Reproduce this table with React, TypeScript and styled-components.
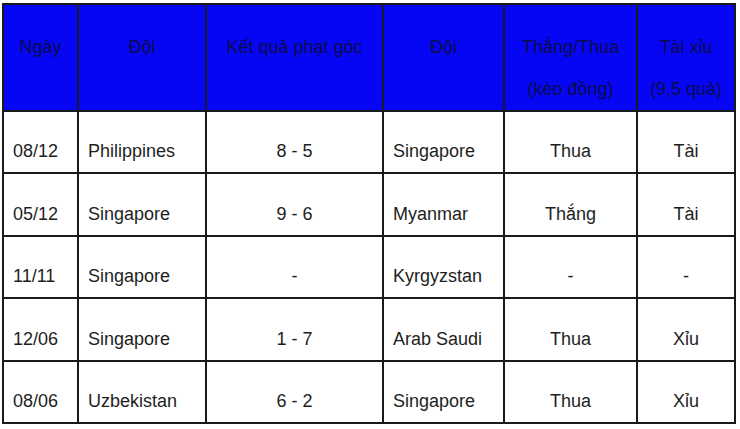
import React from 'react';
import styled, { createGlobalStyle } from 'styled-components';

const GlobalStyle = createGlobalStyle`
  body {
    margin: 0;
    background: #ffffff;
    font-family: "Liberation Sans", Arial, sans-serif;
  }
`;

const Page = styled.div`
  padding: 3px 0 0 2px;
`;

const Table = styled.table`
  width: 732px;
  table-layout: fixed;
  border-collapse: collapse;
  font-size: 18px;
  color: #1e1e1e;
`;

const HeadCell = styled.th`
  background: #0606f4;
  color: #0c0c4c;
  font-weight: normal;
  text-align: center;
  vertical-align: top;
  line-height: 42px;
  padding: 21px 4px 0;
  border: 2px solid #1a1a1a;
`;

const Cell = styled.td<{ $align?: 'left' | 'center' }>`
  text-align: ${(p) => p.$align ?? 'left'};
  vertical-align: top;
  line-height: 42px;
  padding: 18.4px 9px 0;
  border: 2px solid #1a1a1a;
  white-space: nowrap;
`;

const widths = [75, 128, 177, 121, 133, 98];

const rows = [
  ['08/12', 'Philippines', '8 - 5', 'Singapore', 'Thua', 'Tài'],
  ['05/12', 'Singapore', '9 - 6', 'Myanmar', 'Thắng', 'Tài'],
  ['11/11', 'Singapore', '-', 'Kyrgyzstan', '-', '-'],
  ['12/06', 'Singapore', '1 - 7', 'Arab Saudi', 'Thua', 'Xỉu'],
  ['08/06', 'Uzbekistan', '6 - 2', 'Singapore', 'Thua', 'Xỉu'],
];

const aligns: ('left' | 'center')[] = ['left', 'left', 'center', 'left', 'center', 'center'];

export default function App() {
  return (
    <Page>
      <GlobalStyle />
      <Table>
        <colgroup>
          {widths.map((w, i) => (
            <col key={i} style={{ width: w }} />
          ))}
        </colgroup>
        <thead>
          <tr>
            <HeadCell>Ngày</HeadCell>
            <HeadCell>Đội</HeadCell>
            <HeadCell>Kết quả phạt góc</HeadCell>
            <HeadCell>Đội</HeadCell>
            <HeadCell>
              Thắng/Thua
              <br />
              (kèo đồng)
            </HeadCell>
            <HeadCell>
              Tài xỉu
              <br />
              (9,5 quả)
            </HeadCell>
          </tr>
        </thead>
        <tbody>
          {rows.map((r, i) => (
            <tr key={i}>
              {r.map((v, j) => (
                <Cell key={j} $align={aligns[j]}>
                  {v}
                </Cell>
              ))}
            </tr>
          ))}
        </tbody>
      </Table>
    </Page>
  );
}
